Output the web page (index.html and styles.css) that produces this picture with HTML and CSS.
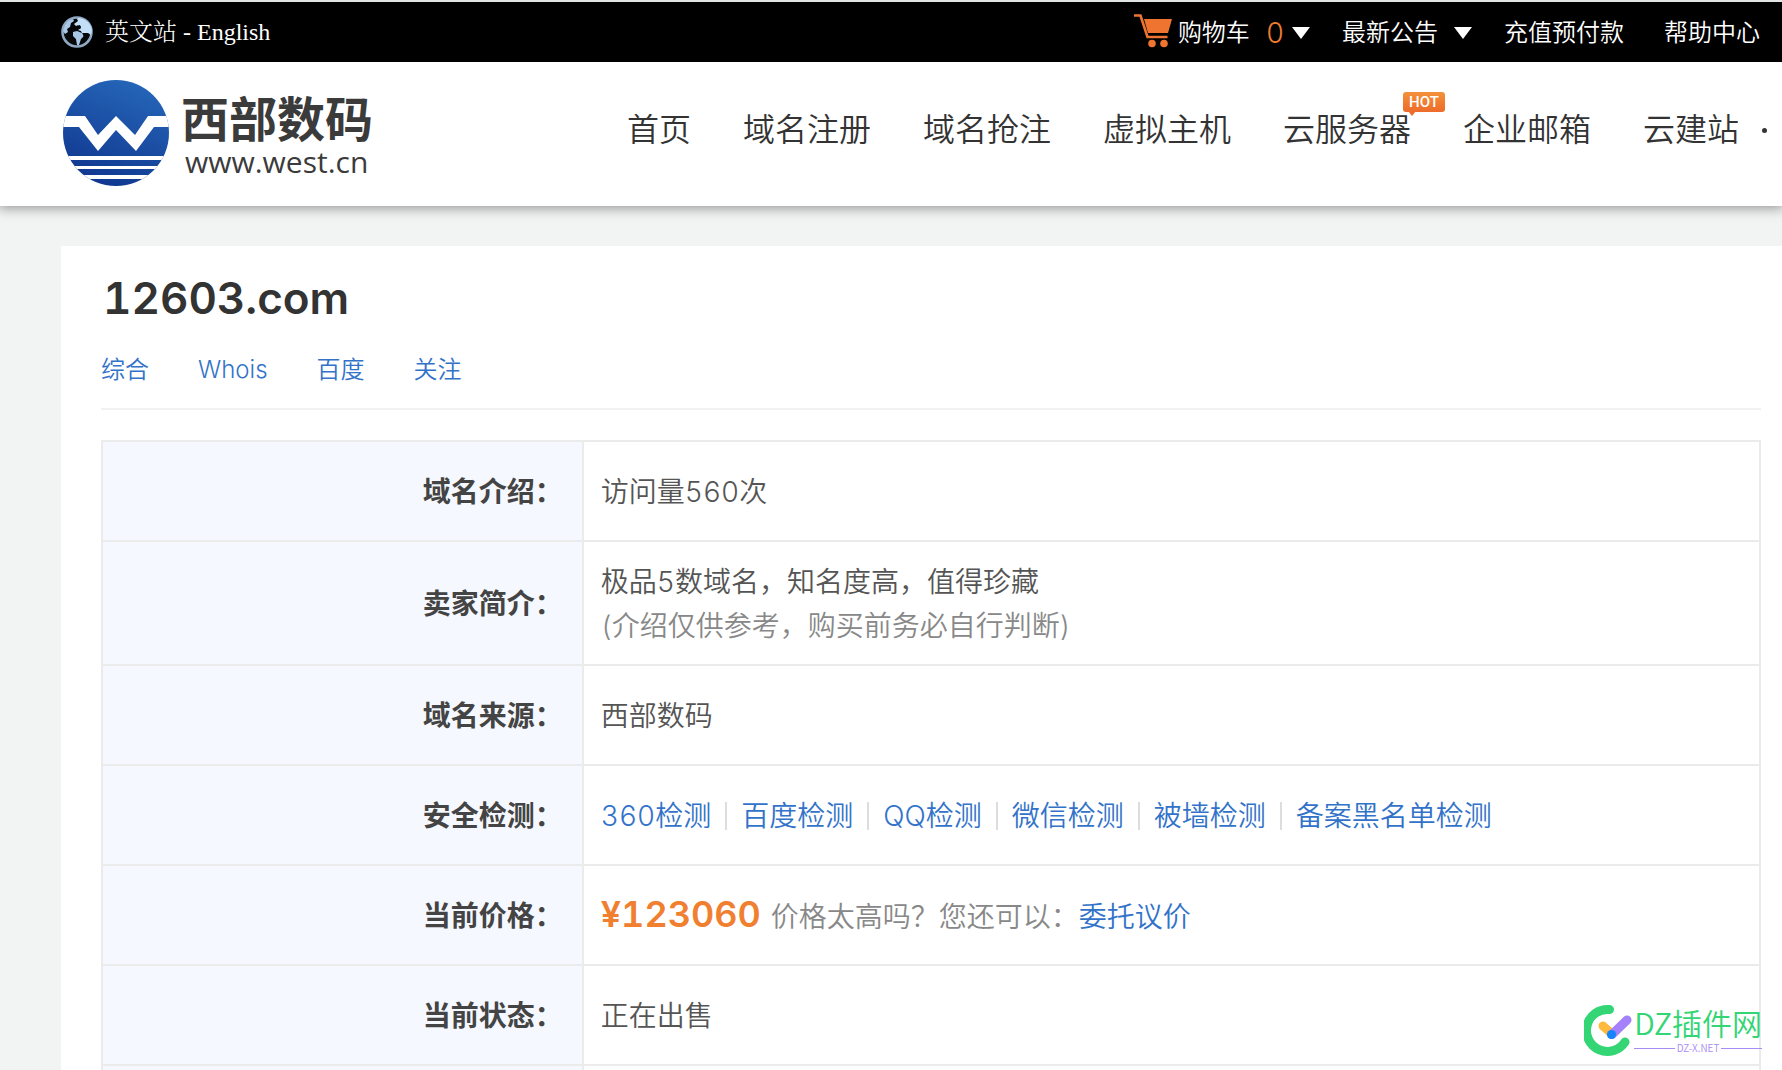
FILE: index.html
```
<!DOCTYPE html>
<html lang="zh-CN">
<head>
<meta charset="utf-8">
<title>12603.com - 西部数码</title>
<link rel="stylesheet" href="styles.css">
</head>
<body>
<div class="topbar">
  <a class="lang" href="#">
    <svg class="globe" viewBox="0 0 32 32" aria-hidden="true">
      <circle cx="16" cy="16" r="14.5" fill="#050709" stroke="#8fa9c2" stroke-width="2.6"/>
      <path fill="#c3dff8" d="M17 2c7 0 13 5 14 12l-1 5-3-2-6 0-1-2-3-1 3-2-1-3-4 1-2-2 4-3-1-2z"/>
      <path fill="#a9c8e6" d="M4 9l3-4 5-2 1 2-3 2-1 4-3 2 1 3-3 2-2-3zM12 16l4-1 5 2 2 3-3 3-2 6h-2l-1-6-3-3z"/>
      <path fill="#050709" d="M22 18l4 0-1 4-2 1zM16 9l2 2 2-1-1 3-3-1z"/>
    </svg>
    <span>英文站 - English</span>
  </a>
  <nav class="tools">
    <a class="cart" href="#">
      <svg class="cart-icon" viewBox="0 0 38 34" aria-hidden="true">
        <path d="M0 1.500h6.500L13.500 23h20" fill="none" stroke="#ee7430" stroke-width="2.600"/>
        <path d="M10 5h28l-4 14H14z" fill="#ee7430"/>
        <circle cx="18" cy="29.500" r="3.800" fill="#ee7430"/><circle cx="30" cy="29.500" r="3.800" fill="#ee7430"/>
      </svg>
      <span>购物车</span><span class="count">0</span><i class="arrow"></i>
    </a>
    <a class="notice" href="#"><span>最新公告</span><i class="arrow"></i></a>
    <a class="recharge" href="#">充值预付款</a>
    <a href="#">帮助中心</a>
  </nav>
</div>
<header class="header">
  <a class="logo" href="#">
    <svg class="logo-mark" viewBox="0 0 106 106" aria-hidden="true">
      <defs>
        <linearGradient id="blue" x1="0.700" y1="0" x2="0.300" y2="1"><stop offset="0" stop-color="#2566b8"/><stop offset="1" stop-color="#10368f"/></linearGradient>
        <clipPath id="disc"><circle cx="53" cy="53" r="53"/></clipPath>
      </defs>
      <g clip-path="url(#disc)">
        <rect width="106" height="106" fill="url(#blue)"/>
        <path fill="#fff" d="M0 36h22l13 19 18-19 19 19 13-19h21v11H91L73 71 53 50 35 71 16 47H0zM0 76h106v4H0zM0 86h106v3H0zM0 95h106v4H0z"/>
      </g>
    </svg>
    <span class="logo-text"><strong>西部数码</strong><span>www.west.cn</span></span>
  </a>
  <nav class="nav">
    <a href="#">首页</a>
    <a href="#">域名注册</a>
    <a href="#">域名抢注</a>
    <a href="#">虚拟主机</a>
    <a class="hot" href="#">云服务器<span class="badge">HOT</span></a>
    <a href="#">企业邮箱</a>
    <a href="#">云建站</a>
    <i class="more"></i>
  </nav>
</header>
<main class="panel">
  <h1>12603.com</h1>
  <nav class="tabs">
    <a href="#">综合</a><a href="#">Whois</a><a href="#">百度</a><a href="#">关注</a>
  </nav>
  <table class="info">
    <tr><th scope="row">域名介绍：</th><td>访问量560次</td></tr>
    <tr><th scope="row">卖家简介：</th><td class="intro">极品5数域名，知名度高，值得珍藏<br><span class="muted">(介绍仅供参考，购买前务必自行判断)</span></td></tr>
    <tr><th scope="row">域名来源：</th><td>西部数码</td></tr>
    <tr><th scope="row">安全检测：</th><td><div class="checks"><a href="#">360检测</a><a href="#">百度检测</a><a href="#">QQ检测</a><a href="#">微信检测</a><a href="#">被墙检测</a><a href="#">备案黑名单检测</a></div></td></tr>
    <tr><th scope="row">当前价格：</th><td><div class="offer"><strong class="price">¥123060</strong><span class="muted">价格太高吗？您还可以：</span><a href="#">委托议价</a></div></td></tr>
    <tr><th scope="row">当前状态：</th><td>正在出售</td></tr>
    <tr><th></th><td></td></tr>
  </table>
</main>
<div class="watermark">
  <svg class="wm-mark" viewBox="0 0 48 52" aria-hidden="true">
    <path d="M25.500 5.500A21 21 0 1 0 41 38" fill="none" stroke="#33d574" stroke-width="9" stroke-linecap="round"/>
    <path d="M19 22l9 8" stroke="#ffb93d" stroke-width="9" stroke-linecap="round"/>
    <path d="M28 30.500L43 16" stroke="#a481fb" stroke-width="9" stroke-linecap="round"/>
    <circle cx="27.500" cy="30.500" r="4.600" fill="#1684ff"/>
  </svg>
  <div class="wm-text"><span>DZ插件网</span><small>DZ-X.NET</small></div>
</div>
</body>
</html>
```
FILE: styles.css
```
* { box-sizing: border-box; }
html, body { height: 100%; }
body {
  margin: 0;
  overflow: hidden;
  position: relative;
  display: flex;
  flex-direction: column;
  background: #f1f4f3;
  color: #555;
  font: 350 28px/44px Inter, "Noto Sans CJK SC", sans-serif;
  font-variant-numeric: tabular-nums;
}
a { color: #3273c9; text-decoration: none; white-space: nowrap; }

.topbar {
  flex: none;
  display: flex;
  justify-content: space-between;
  align-items: center;
  height: 62px;
  padding: 0 22px 0 61px;
  border-top: 2px solid #e1e4e4;
  background: #000;
  font-size: 24px;
}
.topbar a { display: flex; align-items: center; color: #fff; }
.lang { gap: 12px; font-family: "Liberation Serif", "Noto Serif CJK SC", "Noto Sans CJK SC", serif; font-weight: 300; }
.globe { width: 32px; height: 32px; }
.tools { display: flex; padding-top: 2px; }
.cart-icon { width: 38px; height: 34px; margin: 0 6px 4px 0; }
.cart { margin-right: 32px; }
.count { margin: 0 8px 0 16px; color: #ee7d30; font-size: 28px; }
.arrow { width: 18px; height: 12px; background: #fff; clip-path: polygon(0 0, 100% 0, 50% 100%); }
.notice { gap: 16px; margin-right: 32px; }
.recharge { margin-right: 40px; }

.header {
  flex: none;
  position: relative;
  display: flex;
  justify-content: space-between;
  height: 144px;
  padding: 16px 15px 0 63px;
  background: #fff;
  box-shadow: 0 0 12px 2px rgba(0, 0, 0, .4);
  clip-path: inset(0 0 -20px);
}
.logo { display: flex; gap: 12px; color: #3b3b3b; }
.logo-mark { width: 106px; height: 110px; }
.logo-text { display: flex; flex-direction: column; padding-top: 6px; }
.logo-text strong { font-size: 48px; line-height: 72px; font-weight: 700; }
.logo-text span { padding-left: 4px; font: 400 30px/28px "Open Sans", sans-serif; margin-top: -8px; }
.nav { display: flex; gap: 52px; height: 104px; align-items: center; font-size: 32px; }
.nav a { color: #333; }
.hot { position: relative; }
.badge {
  position: absolute;
  left: 120px;
  top: -16px;
  width: 42px;
  height: 20px;
  border-radius: 3px;
  background: linear-gradient(#f29238, #ee6b2b);
  color: #fff;
  font: 500 15px/20px Roboto, sans-serif;
  text-align: center;
}
.badge::after {
  content: "";
  position: absolute;
  left: 5px;
  top: 19px;
  border: solid transparent;
  border-width: 5px 4px 0;
  border-top-color: #ee6b2b;
}
.more { width: 5px; height: 5px; margin-left: -29px; border-radius: 50%; background: #333; }

.panel { flex: 1 0 auto; margin: 40px 0 0 61px; padding: 24px 21px 0 40px; background: #fff; }
h1 { margin: 0; padding-left: 2px; color: #333; font-size: 44px; line-height: 56px; font-weight: 600; }
.tabs {
  display: flex;
  gap: 49px;
  margin-bottom: 30px;
  padding: 22px 0 16px;
  border-bottom: 2px solid #f1f1f1;
  font-size: 24px;
}
.info { width: 100%; border-collapse: collapse; table-layout: fixed; }
.info th, .info td { height: 100px; border: 2px solid #ebebeb; }
.info th { width: 29%; padding: 2px 19px 0 0; background: #f5f8fe; color: #444; font-weight: 700; text-align: right; }
.info td { padding: 2px 17px 0; }
.info .intro { height: 124px; }
.muted { color: #888; }
.checks { display: flex; }
.checks a + a { display: flex; align-items: center; }
.checks a + a::before { content: ""; width: 2px; height: 28px; margin: 0 14px; background: #ddd; }
.offer { display: flex; align-items: baseline; }
.price { margin-right: 10px; color: #f08030; font-size: 36px; line-height: 40px; font-weight: 600; }

.watermark { position: absolute; right: 20px; bottom: 14px; display: flex; gap: 2px; }
.wm-mark { width: 48px; height: 52px; }
.wm-text { display: flex; flex-direction: column; color: #33d574; font: 350 30px/36px "Noto Sans CJK SC", sans-serif; }
.wm-text small { display: flex; align-items: center; gap: 2px; color: #a98bf5; font-size: 10px; line-height: 16px; }
.wm-text small::before, .wm-text small::after { content: ""; flex: 1; height: 1px; background: #a98bf5; }
```
